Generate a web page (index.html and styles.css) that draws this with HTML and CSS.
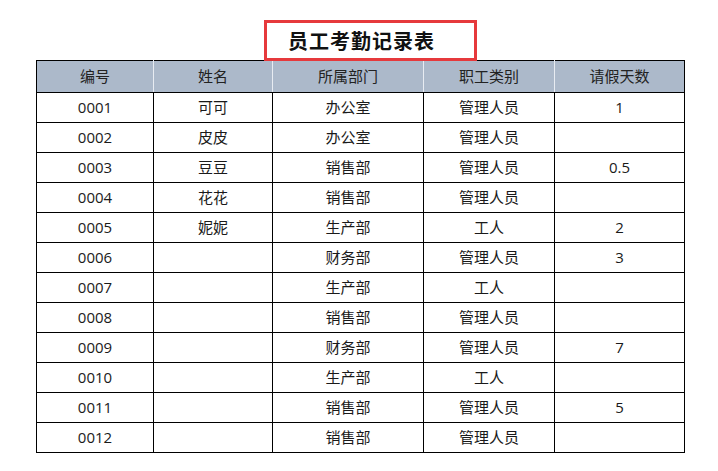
FILE: index.html
```html
<!DOCTYPE html>
<html lang="zh">
<head>
<meta charset="utf-8">
<title>员工考勤记录表</title>
<link rel="stylesheet" href="styles.css">
</head>
<body>
<div class="page">
  <div class="title-box"><h1 class="title">员工考勤记录表</h1></div>
  <table class="sheet">
    <colgroup>
      <col class="c1"><col class="c2"><col class="c3"><col class="c4"><col class="c5">
    </colgroup>
    <thead>
      <tr><th>编号</th><th>姓名</th><th>所属部门</th><th>职工类别</th><th>请假天数</th></tr>
    </thead>
    <tbody>
      <tr><td>0001</td><td>可可</td><td>办公室</td><td>管理人员</td><td>1</td></tr>
      <tr><td>0002</td><td>皮皮</td><td>办公室</td><td>管理人员</td><td></td></tr>
      <tr><td>0003</td><td>豆豆</td><td>销售部</td><td>管理人员</td><td>0.5</td></tr>
      <tr><td>0004</td><td>花花</td><td>销售部</td><td>管理人员</td><td></td></tr>
      <tr><td>0005</td><td>妮妮</td><td>生产部</td><td>工人</td><td>2</td></tr>
      <tr><td>0006</td><td></td><td>财务部</td><td>管理人员</td><td>3</td></tr>
      <tr><td>0007</td><td></td><td>生产部</td><td>工人</td><td></td></tr>
      <tr><td>0008</td><td></td><td>销售部</td><td>管理人员</td><td></td></tr>
      <tr><td>0009</td><td></td><td>财务部</td><td>管理人员</td><td>7</td></tr>
      <tr><td>0010</td><td></td><td>生产部</td><td>工人</td><td></td></tr>
      <tr><td>0011</td><td></td><td>销售部</td><td>管理人员</td><td>5</td></tr>
      <tr><td>0012</td><td></td><td>销售部</td><td>管理人员</td><td></td></tr>
    </tbody>
  </table>
</div>
</body>
</html>
```

FILE: styles.css
```css
html, body {
  margin: 0;
  padding: 0;
  background: #ffffff;
}
body {
  font-family: "Open Sans", "Noto Sans CJK SC", sans-serif;
  color: #1a1a1a;
}
.page {
  padding: 20px 0 0 36px;
}
.title-box {
  position: relative;
  z-index: 1;
  box-sizing: border-box;
  width: 213px;
  height: 41px;
  margin-left: 228px;
  border: 3px solid #e6393c;
  background: #ffffff;
  display: flex;
  align-items: center;
  padding-left: 21px;
}
.title {
  margin: 0;
  font-family: "Noto Sans CJK SC", sans-serif;
  font-size: 20px;
  font-weight: 700;
  letter-spacing: 1px;
  color: #111;
  line-height: 1;
}
.sheet {
  margin-top: -1px;
  border-collapse: collapse;
  table-layout: fixed;
  width: 648px;
  font-size: 15px;
  line-height: 1;
}
.c1 { width: 117px; }
.c2 { width: 119px; }
.c3 { width: 151px; }
.c4 { width: 131px; }
.c5 { width: 130px; }
.sheet th,
.sheet td {
  border: 1px solid #000;
  text-align: center;
  vertical-align: middle;
  padding: 0;
  font-weight: 400;
  font-family: "Open Sans", "Noto Sans CJK SC", sans-serif;
}
.sheet th {
  height: 31px;
  background: #acb9ca;
  color: #222;
  border-left-color: #e8ecf2;
  border-right-color: #e8ecf2;
}
.sheet th:first-child { border-left-color: #000; }
.sheet th:last-child { border-right-color: #000; }
.sheet td {
  height: 29px;
}
```
